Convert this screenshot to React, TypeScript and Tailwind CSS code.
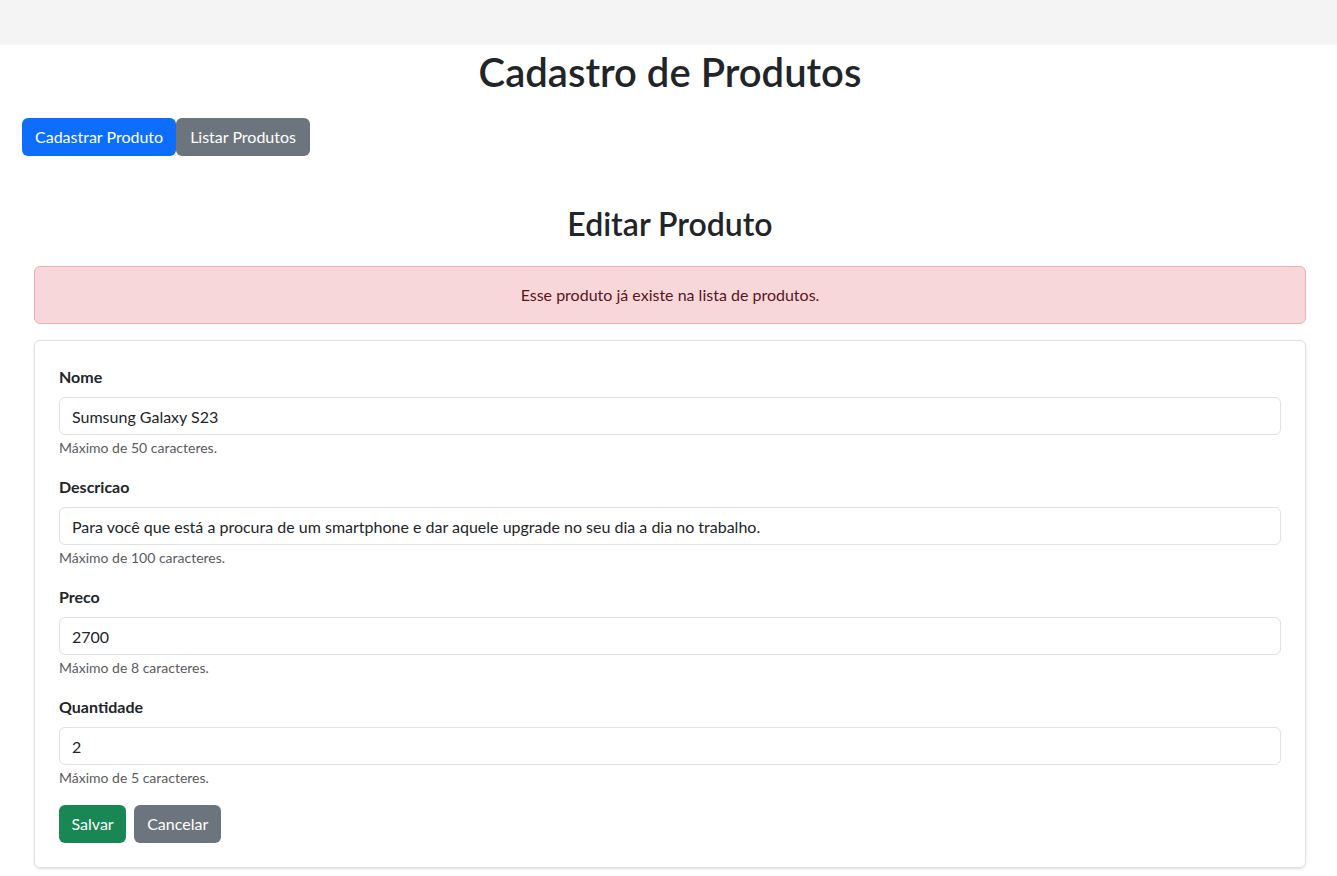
const campos = [
  { label: "Nome", valor: "Sumsung Galaxy S23", ajuda: "Máximo de 50 caracteres." },
  {
    label: "Descricao",
    valor: "Para você que está a procura de um smartphone e dar aquele upgrade no seu dia a dia no trabalho.",
    ajuda: "Máximo de 100 caracteres.",
  },
  { label: "Preco", valor: "2700", ajuda: "Máximo de 8 caracteres." },
  { label: "Quantidade", valor: "2", ajuda: "Máximo de 5 caracteres." },
];

export default function App() {
  return (
    <div className="min-h-screen bg-white text-[#212529] font-['Lato',_'Liberation_Sans',_sans-serif]">
      {/* barra superior */}
      <div className="h-[45px] bg-[#f4f4f4]" />

      <h1 className="mt-[3px] pl-[3px] text-center text-[40px] leading-[48px] font-semibold">Cadastro de Produtos</h1>

      <div className="px-[22px] mt-[22px] flex">
        <button className="h-[38px] px-[13px] rounded-md bg-[#0d6efd] text-white text-base">Cadastrar Produto</button>
        <button className="h-[38px] px-[14px] rounded-md bg-[#6c757d] text-white text-base">Listar Produtos</button>
      </div>

      <div className="ml-[34px] mr-[31px] mt-[49px]">
        <h2 className="text-center text-[32px] leading-[38px] font-semibold">Editar Produto</h2>

        <div className="mt-[23px] rounded-md border border-[#f1aeb5] bg-[#f8d7da] py-4 text-center text-[#58151c] leading-6">
          Esse produto já existe na lista de produtos.
        </div>

        <div className="mt-4 rounded-md border border-[#dee2e6] shadow-sm p-6">
          {campos.map((c) => (
            <div key={c.label} className="mb-[17px]">
              <label className="block font-bold leading-6 mb-2">{c.label}</label>
              <input
                readOnly
                value={c.valor}
                className="block w-full h-[38px] px-3 rounded-md border border-[#dee2e6] text-base text-[#212529] outline-none"
              />
              <div className="mt-[2px] text-sm leading-[21px] text-[#595c5f]">{c.ajuda}</div>
            </div>
          ))}
          <div className="flex gap-2">
            <button className="h-[38px] px-[12.5px] rounded-md bg-[#198754] text-white text-base">Salvar</button>
            <button className="h-[38px] px-[13px] rounded-md bg-[#6c757d] text-white text-base">Cancelar</button>
          </div>
        </div>
      </div>
    </div>
  );
}
